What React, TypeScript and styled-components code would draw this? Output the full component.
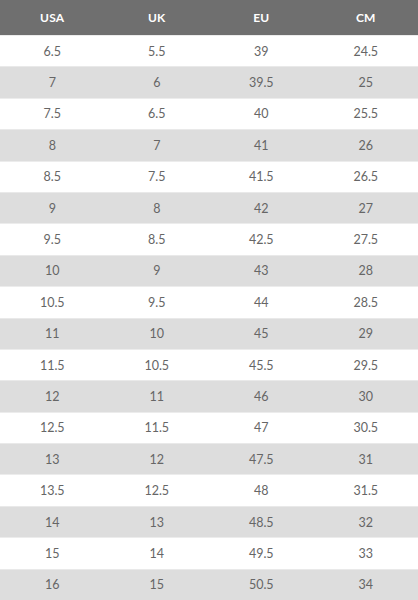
import React from 'react';
import styled, { createGlobalStyle } from 'styled-components';

const sizes = [
  ['6.5', '5.5', '39', '24.5'],
  ['7', '6', '39.5', '25'],
  ['7.5', '6.5', '40', '25.5'],
  ['8', '7', '41', '26'],
  ['8.5', '7.5', '41.5', '26.5'],
  ['9', '8', '42', '27'],
  ['9.5', '8.5', '42.5', '27.5'],
  ['10', '9', '43', '28'],
  ['10.5', '9.5', '44', '28.5'],
  ['11', '10', '45', '29'],
  ['11.5', '10.5', '45.5', '29.5'],
  ['12', '11', '46', '30'],
  ['12.5', '11.5', '47', '30.5'],
  ['13', '12', '47.5', '31'],
  ['13.5', '12.5', '48', '31.5'],
  ['14', '13', '48.5', '32'],
  ['15', '14', '49.5', '33'],
  ['16', '15', '50.5', '34']
];

const GlobalStyle = createGlobalStyle`
	body {
		margin: 0;
		background: #fff;
		font-family: Lato, "Open Sans", sans-serif;
	}
`;

const Table = styled.div`
	width: 418px;
	height: 600px;
	display: grid;
	grid-template-rows: 35px repeat(18, 1fr);
	overflow: hidden;
`;

const Row = styled.div<{ $shade?: boolean }>`
	display: grid;
	grid-template-columns: repeat(4, 1fr);
	align-items: center;
	background: ${p => (p.$shade ? '#dddddd' : '#ffffff')};
	border-top: 1px solid ${p => (p.$shade ? '#e9e9e9' : '#ececec')};
`;

const HeadRow = styled.div`
	display: grid;
	grid-template-columns: repeat(4, 1fr);
	align-items: center;
	background: #6f6f6f;
`;

const HeadCell = styled.div`
	text-align: center;
	color: #fff;
	font-size: 12px;
	font-weight: 700;
	letter-spacing: 0.2px;
`;

const Cell = styled.div`
	text-align: center;
	color: #666;
	font-size: 12.5px;
`;

function App() {
	return <>
	         <GlobalStyle />
	         <Table>
	           <HeadRow>
	             {['USA', 'UK', 'EU', 'CM'].map(h => <HeadCell key={h}>{h}</HeadCell>)}
	           </HeadRow>
	           {sizes.map((row, ndx) => {
	             return <Row key={ndx} $shade={ndx % 2 === 1}>
	                      {row.map((v, i) => <Cell key={i}>{v}</Cell>)}
	                    </Row>
	           })}
	         </Table>
	       </>;
}

export default App;
